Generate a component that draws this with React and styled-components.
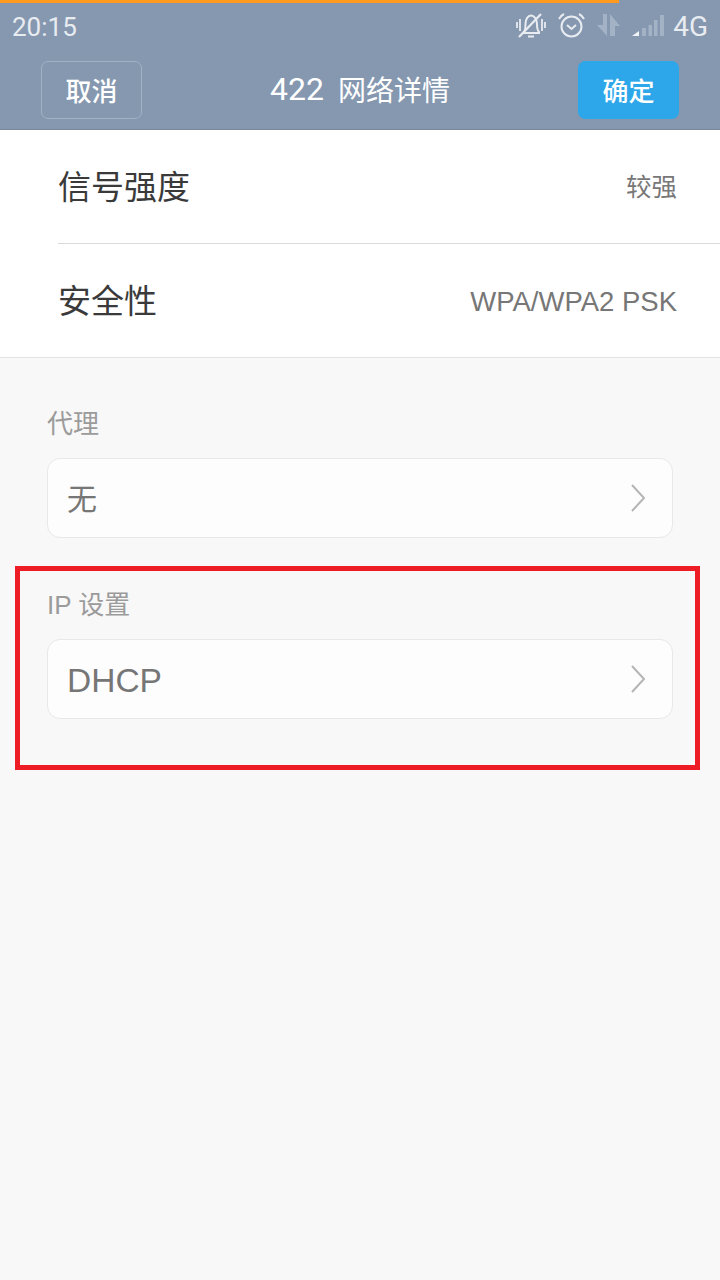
import React from "react"
import styled, { createGlobalStyle } from "styled-components"

const Global = createGlobalStyle`
  html, body { margin: 0; padding: 0; background: #f8f8f8; }
  body { font-family: "Roboto", "Noto Sans CJK SC", sans-serif; }
`

const Page = styled.div`
  position: relative;
  width: 720px;
  height: 1280px;
  overflow: hidden;
  background: #f8f8f8;
`

const Header = styled.header`
  height: 129px;
  background: #8598b0;
  border-bottom: 1px solid #76869b;
`

const Progress = styled.div`
  width: 619px;
  height: 3px;
  background: #ff9a1f;
`

const StatusBar = styled.div`
  height: 47px;
  padding: 0 12px;
  display: flex;
  align-items: center;
  justify-content: space-between;
  color: #e8ecf1;
`

const Time = styled.span`
  font-size: 26px;
  font-weight: 400;
`

const StatusIcons = styled.div`
  display: flex;
  align-items: center;
  gap: 12px;
  & svg { margin-bottom: 3px; }
`

const Network = styled.span`
  font-size: 28px;
  font-weight: 400;
  margin-left: -3px;
  margin-bottom: 1px;
`

const ActionBar = styled.div`
  height: 58px;
  margin-top: 11px;
  padding: 0 41px;
  display: grid;
  grid-template-columns: 101px 1fr 101px;
  align-items: stretch;
`

const ActionButton = styled.button`
  padding: 0 0 2px;
  font-family: "Noto Sans CJK SC", sans-serif;
  font-size: 26px;
  font-weight: 500;
  color: #fff;
  border-radius: 7px;
  border: 1px solid ${p => (p.$primary ? "#2ea7ea" : "#a3b1c4")};
  background: ${p => (p.$primary ? "#2ea7ea" : "transparent")};
`

const Title = styled.div`
  display: flex;
  align-items: center;
  justify-content: center;
  gap: 14px;
  padding-bottom: 2px;
  font-family: "Noto Sans CJK SC", sans-serif;
  font-size: 28px;
  color: #fff;
  & span:first-child {
    font-family: "Roboto", sans-serif;
    font-size: 32px;
  }
`

const InfoList = styled.section`
  background: #fff;
  border-bottom: 1px solid #e2e2e2;
  padding-left: 58px;
`

const InfoRow = styled.div`
  height: 113px;
  padding-right: 43px;
  display: flex;
  align-items: center;
  justify-content: space-between;
  border-bottom: ${p => (p.$last ? "none" : "1px solid #d9d9d9")};
`

const InfoLabel = styled.span`
  padding-bottom: 4px;
  font-family: "Noto Sans CJK SC", sans-serif;
  font-size: 33px;
  color: #3a3a3a;
`

const InfoValue = styled.span`
  padding-top: ${p => (p.$latin ? "3px" : "0")};
  padding-bottom: ${p => (p.$latin ? "0" : "4px")};
  font-family: "Liberation Sans", "Noto Sans CJK SC", sans-serif;
  font-size: ${p => (p.$latin ? "27.5px" : "25.5px")};
  color: #777;
`

const Fields = styled.main`
  padding: 49px 47px 0;
`

const Field = styled.div`
  margin-bottom: 50px;
`

const FieldLabel = styled.div`
  height: 35px;
  line-height: 35px;
  margin-bottom: 16px;
  font-family: "Liberation Sans", "Noto Sans CJK SC", sans-serif;
  font-size: 26px;
  color: #9b9b9b;
`

const Select = styled.div`
  box-sizing: border-box;
  width: 626px;
  height: 80px;
  padding: 0 26px 0 19px;
  display: flex;
  align-items: center;
  justify-content: space-between;
  background: #fdfdfd;
  border: 1px solid #e8e8e8;
  border-radius: 13px;
  font-family: "Liberation Sans", "Noto Sans CJK SC", sans-serif;
  font-size: ${p => (p.$cjk ? "30px" : "33.5px")};
  color: #767676;
`

const SelectText = styled.span`
  padding-top: ${p => (p.$cjk ? "0" : "4px")};
  padding-bottom: ${p => (p.$cjk ? "3px" : "0")};
`

const Highlight = styled.div`
  position: absolute;
  left: 15px;
  top: 566px;
  width: 685px;
  height: 204px;
  box-sizing: border-box;
  border: 5px solid #ee1c25;
`

const BellOff = () => (
  <svg width="30" height="25" viewBox="0 0 30 25" fill="none" stroke="#e8ecf1" strokeWidth="2">
    <path d="M8 19c1.5-2 1.5-4 1.5-8C9.500 6 12 2.500 15 2.500S21 6 21 11c0 4 0 6 2 8v1H8z" />
    <path d="M12 23.500h6" />
    <path d="M3 24 25 1" strokeWidth="2.200" />
    <path d="M1 9v6M4 6v12M26 6v12M29 9v6" strokeWidth="1.800" />
  </svg>
)

const Alarm = () => (
  <svg width="27" height="25" viewBox="0 0 27 25" fill="none" stroke="#e8ecf1" strokeWidth="2">
    <circle cx="13.500" cy="13.500" r="10" />
    <path d="M9 12l4.500 4 4.500-4" />
    <path d="M1 6c1-2 3-4 5-5M26 6c-1-2-3-4-5-5" />
  </svg>
)

const DataArrows = () => (
  <svg width="23" height="22" viewBox="0 0 23 22" fill="#a4b2c5">
    <path d="M6 0h4v22L0 11h6zM13 22V0l10 12h-5v10z" />
  </svg>
)

const Signal = () => (
  <svg width="32" height="21" viewBox="0 0 32 21">
    <path d="M0 21l7-5v5z" fill="#f1f3f6" />
    <path d="M10 13h4v8h-4zM16.500 10h3.500v11h-3.500zM22 5h3.500v16H22zM28 0h4v21h-4z" fill="#a4b2c5" />
  </svg>
)

const Chevron = () => (
  <svg width="16" height="28" viewBox="0 0 16 28" fill="none" stroke="#b5b5b5" strokeWidth="2">
    <path d="M2 1l12 13L2 27" />
  </svg>
)

const App = () => (
  <Page>
    <Global />
    <Header>
      <Progress />
      <StatusBar>
        <Time>20:15</Time>
        <StatusIcons>
          <BellOff />
          <Alarm />
          <DataArrows />
          <Signal />
          <Network>4G</Network>
        </StatusIcons>
      </StatusBar>
      <ActionBar>
        <ActionButton>取消</ActionButton>
        <Title>
          <span>422</span>
          <span>网络详情</span>
        </Title>
        <ActionButton $primary>确定</ActionButton>
      </ActionBar>
    </Header>
    <InfoList>
      <InfoRow>
        <InfoLabel>信号强度</InfoLabel>
        <InfoValue>较强</InfoValue>
      </InfoRow>
      <InfoRow $last>
        <InfoLabel>安全性</InfoLabel>
        <InfoValue $latin>WPA/WPA2 PSK</InfoValue>
      </InfoRow>
    </InfoList>
    <Fields>
      <Field>
        <FieldLabel>代理</FieldLabel>
        <Select $cjk>
          <SelectText $cjk>无</SelectText>
          <Chevron />
        </Select>
      </Field>
      <Field>
        <FieldLabel>IP 设置</FieldLabel>
        <Select>
          <SelectText>DHCP</SelectText>
          <Chevron />
        </Select>
      </Field>
    </Fields>
    <Highlight />
  </Page>
)

export default App
